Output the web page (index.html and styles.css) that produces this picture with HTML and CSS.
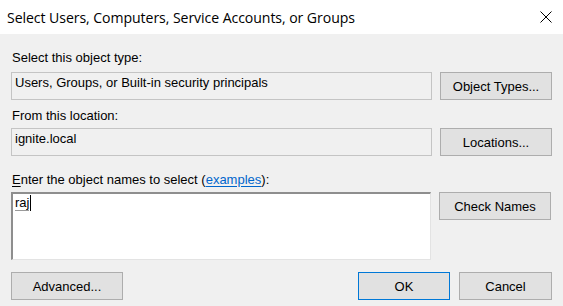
FILE: index.html
```html
<!DOCTYPE html>
<html>
<head>
<meta charset="utf-8">
<link rel="stylesheet" href="styles.css">
</head>
<body>
<div class="dialog">
  <div class="titlebar">
    <span class="title">Select Users, Computers, Service Accounts, or Groups</span>
    <svg class="close" width="12" height="12" viewBox="0 0 12 12"><path d="M0.5 0.5 L11.5 11.5 M11.5 0.5 L0.5 11.5" stroke="#000" stroke-width="1" fill="none"/></svg>
  </div>
  <div class="content">
    <div class="label l1">Select this object type:</div>
    <div class="row r1">
      <div class="field">Users, Groups, or Built-in security principals</div>
      <div class="btn side">Object Types...</div>
    </div>
    <div class="label l2">From this location:</div>
    <div class="row r2">
      <div class="field">ignite.local</div>
      <div class="btn side">Locations...</div>
    </div>
    <div class="label l3"><span class="u">E</span>nter the object names to select (<a class="link">examples</a>):</div>
    <div class="row r3">
      <div class="textarea"><span class="typed">raj</span><span class="caret"></span></div>
      <div class="btn side">Check Names</div>
    </div>
    <div class="bottom">
      <div class="btn adv">Advanced...</div>
      <div class="spacer"></div>
      <div class="btn ok">OK</div>
      <div class="btn cancel">Cancel</div>
    </div>
  </div>
</div>
</body>
</html>
```
FILE: styles.css
```css
html, body {
  margin: 0;
  padding: 0;
  background: #f0f0f0;
  width: 563px;
  height: 306px;
  overflow: hidden;
}
.dialog {
  font-family: "Liberation Sans", Arial, sans-serif;
  font-size: 13px;
  color: #000;
}
.titlebar {
  height: 34px;
  background: #fff;
  display: flex;
  align-items: center;
  justify-content: space-between;
  padding: 0 11px 0 7px;
  box-sizing: border-box;
}
.title {
  font-family: "Open Sans", "Noto Sans", sans-serif;
  font-size: 14.1px;
  color: #000;
  letter-spacing: -0.07px;
}
.close {
  display: block;
  margin-top: -1px;
}
.content {
  padding: 0 11px;
}
.label {
  line-height: 16px;
  padding-left: 1px;
}
.l1 { margin-top: 16px; }
.l2 { margin-top: 8px; }
.l3 { margin-top: 16px; }
.u { text-decoration: underline; text-underline-offset: 2px; }
.link {
  color: #0066cc;
  text-decoration: underline;
  text-underline-offset: 2px;
}
.row {
  display: flex;
  gap: 8px;
  align-items: flex-start;
}
.r1 { margin-top: 6px; }
.r2 { margin-top: 4px; }
.r3 { margin-top: 4px; }
.field {
  width: 421px;
  height: 28px;
  box-sizing: border-box;
  border: 1px solid #c4c4c4;
  background: #f0f0f0;
  padding: 2px 3px;
  line-height: 16px;
  white-space: nowrap;
}
.textarea {
  width: 420px;
  height: 68px;
  box-sizing: border-box;
  background: #fff;
  border: 1px solid #e3e3e3;
  border-top: 2px solid #8e8e8e;
  border-left: 2px solid #8e8e8e;
  padding: 1px 2px;
  line-height: 16px;
  display: flex;
  align-items: flex-start;
}
.typed {
  border-bottom: 1px solid #9a9a9a;
  line-height: 15px;
}
.caret {
  display: inline-block;
  width: 1px;
  height: 16px;
  background: #000;
  margin-left: 1px;
}
.btn {
  height: 28px;
  box-sizing: border-box;
  background: #e1e1e1;
  border: 1px solid #adadad;
  display: flex;
  align-items: center;
  justify-content: center;
  white-space: nowrap;
}
.side { width: 112px; }
.bottom {
  display: flex;
  margin-top: 12px;
  gap: 9px;
}
.spacer { flex: 1; }
.adv { width: 112px; }
.ok {
  width: 92px;
  border: 1px solid #0078d7;
}
.cancel { width: 93px; }
```
